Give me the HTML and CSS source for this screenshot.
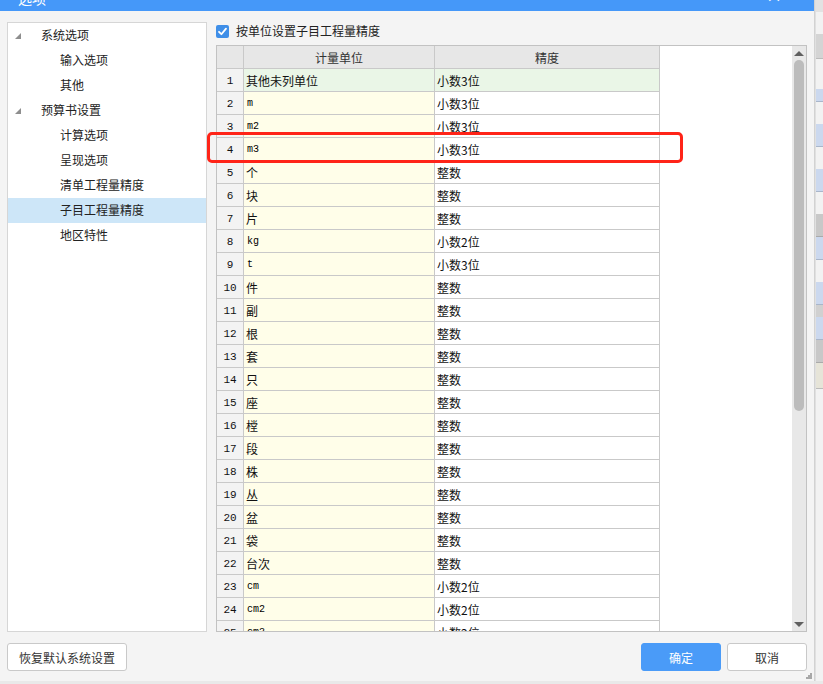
FILE: index.html
```html
<!DOCTYPE html>
<html lang="zh-CN">
<head>
<meta charset="utf-8">
<title>选项</title>
<link rel="stylesheet" href="styles.css">
</head>
<body>
<div class="screen">
  <div class="top">
    <div class="dialog">
      <div class="titlebar">
        <span class="title">选项</span>
        <span class="close">×</span>
      </div>
      <div class="content">
        <div class="tree">
          <div class="item lvl1"><span class="tri"></span>系统选项</div>
          <div class="item lvl2">输入选项</div>
          <div class="item lvl2">其他</div>
          <div class="item lvl1"><span class="tri"></span>预算书设置</div>
          <div class="item lvl2">计算选项</div>
          <div class="item lvl2">呈现选项</div>
          <div class="item lvl2">清单工程量精度</div>
          <div class="item lvl2 selected">子目工程量精度</div>
          <div class="item lvl2">地区特性</div>
        </div>
        <div class="rightcol">
          <label class="checkrow">
            <span class="checkbox"><svg width="13" height="13" viewBox="0 0 13 13"><path d="M3 6.8 L5.4 9.2 L10 3.6" fill="none" stroke="#fff" stroke-width="1.8" stroke-linecap="round" stroke-linejoin="round"/></svg></span>
            <span>按单位设置子目工程量精度</span>
          </label>
          <div class="tablebox">
            <div class="grid">
              <div class="row head">
                <div class="cell num"></div>
                <div class="cell unit center">计量单位</div>
                <div class="cell prec center">精度</div>
              </div>
              <div class="row first"><div class="cell num">1</div><div class="cell unit">其他未列单位</div><div class="cell prec">小数3位</div></div>
              <div class="row"><div class="cell num">2</div><div class="cell unit lat">m</div><div class="cell prec">小数3位</div></div>
              <div class="row"><div class="cell num">3</div><div class="cell unit lat">m2</div><div class="cell prec">小数3位</div></div>
              <div class="row"><div class="cell num">4</div><div class="cell unit lat">m3</div><div class="cell prec">小数3位</div></div>
              <div class="row"><div class="cell num">5</div><div class="cell unit">个</div><div class="cell prec">整数</div></div>
              <div class="row"><div class="cell num">6</div><div class="cell unit">块</div><div class="cell prec">整数</div></div>
              <div class="row"><div class="cell num">7</div><div class="cell unit">片</div><div class="cell prec">整数</div></div>
              <div class="row"><div class="cell num">8</div><div class="cell unit lat">kg</div><div class="cell prec">小数2位</div></div>
              <div class="row"><div class="cell num">9</div><div class="cell unit lat">t</div><div class="cell prec">小数3位</div></div>
              <div class="row"><div class="cell num">10</div><div class="cell unit">件</div><div class="cell prec">整数</div></div>
              <div class="row"><div class="cell num">11</div><div class="cell unit">副</div><div class="cell prec">整数</div></div>
              <div class="row"><div class="cell num">12</div><div class="cell unit">根</div><div class="cell prec">整数</div></div>
              <div class="row"><div class="cell num">13</div><div class="cell unit">套</div><div class="cell prec">整数</div></div>
              <div class="row"><div class="cell num">14</div><div class="cell unit">只</div><div class="cell prec">整数</div></div>
              <div class="row"><div class="cell num">15</div><div class="cell unit">座</div><div class="cell prec">整数</div></div>
              <div class="row"><div class="cell num">16</div><div class="cell unit">樘</div><div class="cell prec">整数</div></div>
              <div class="row"><div class="cell num">17</div><div class="cell unit">段</div><div class="cell prec">整数</div></div>
              <div class="row"><div class="cell num">18</div><div class="cell unit">株</div><div class="cell prec">整数</div></div>
              <div class="row"><div class="cell num">19</div><div class="cell unit">丛</div><div class="cell prec">整数</div></div>
              <div class="row"><div class="cell num">20</div><div class="cell unit">盆</div><div class="cell prec">整数</div></div>
              <div class="row"><div class="cell num">21</div><div class="cell unit">袋</div><div class="cell prec">整数</div></div>
              <div class="row"><div class="cell num">22</div><div class="cell unit">台次</div><div class="cell prec">整数</div></div>
              <div class="row"><div class="cell num">23</div><div class="cell unit lat">cm</div><div class="cell prec">小数2位</div></div>
              <div class="row"><div class="cell num">24</div><div class="cell unit lat">cm2</div><div class="cell prec">小数2位</div></div>
              <div class="row"><div class="cell num">25</div><div class="cell unit lat">cm3</div><div class="cell prec">小数2位</div></div>
            </div>
            <div class="scrollbar">
              <div class="arrow"><span class="up"></span></div>
              <div class="thumb"></div>
              <div class="spacer"></div>
              <div class="arrow"><span class="down"></span></div>
            </div>
            <div class="mark"></div>
          </div>
        </div>
      </div>
      <div class="footer">
        <button class="btn">恢复默认系统设置</button>
        <div class="footright">
          <button class="btn primary">确定</button>
          <button class="btn">取消</button>
        </div>
        <svg class="grip" width="6" height="6" viewBox="0 0 6 6"><g fill="#a8a8a8"><rect x="4" y="0" width="2" height="2"/><rect x="2" y="2" width="2" height="2"/><rect x="4" y="2" width="2" height="2"/><rect x="0" y="4" width="2" height="2"/><rect x="2" y="4" width="2" height="2"/><rect x="4" y="4" width="2" height="2"/></g></svg>
      </div>
    </div>
    <div class="appstrip">
      <div class="s s1"></div>
      <div class="s s2"></div>
      <div class="s s3"></div>
      <div class="s s4"></div>
      <div class="s s5"></div>
      <div class="s s2"></div>
      <div class="s s6"></div>
      <div class="s s2"></div>
      <div class="s s6"></div>
      <div class="s s2"></div>
      <div class="s s7"></div>
      <div class="s s6"></div>
      <div class="s s2"></div>
      <div class="s s6"></div>
      <div class="s s8"></div>
      <div class="s s6"></div>
      <div class="s s7"></div>
      <div class="s s9"></div>
      <div class="s s10"></div>
    </div>
  </div>
  <div class="bottomstrip"></div>
</div>
</body>
</html>
```

FILE: styles.css
```css
html, body {
  margin: 0;
  padding: 0;
}
body {
  width: 823px;
  height: 684px;
  overflow: hidden;
  background: #e8e8e8;
  font-family: "Noto Sans CJK SC", "Microsoft YaHei", sans-serif;
  color: #222;
}
.screen {
  display: flex;
  flex-direction: column;
  height: 684px;
}
.top {
  display: flex;
  height: 681px;
}
.dialog {
  width: 814px;
  flex: none;
  display: flex;
  flex-direction: column;
  background: #f4f4f4;
  border-right: 1px solid #d2d2d2;
  position: relative;
}
.titlebar {
  height: 11px;
  flex: none;
  background: #4598f9;
  color: #fff;
  overflow: hidden;
  display: flex;
  justify-content: space-between;
  align-items: flex-end;
  padding: 0 32px 0 18px;
}
.title {
  font-size: 14px;
  line-height: 14px;
  margin-bottom: 6px;
}
.close {
  font-size: 16px;
  line-height: 16px;
  margin-bottom: 8px;
}
.content {
  display: flex;
  gap: 9px;
  padding: 11px 7px 0 7px;
  height: 610px;
}
.tree {
  width: 200px;
  height: 610px;
  box-sizing: border-box;
  border: 1px solid #d6d6d6;
  background: #fff;
}
.item {
  height: 25px;
  box-sizing: border-box;
  padding-bottom: 2px;
  display: flex;
  align-items: center;
  font-size: 12px;
  color: #222;
}
.lvl1 {
  padding-left: 7px;
}
.lvl2 {
  padding-left: 52px;
}
.tri {
  width: 0;
  height: 0;
  border-left: 6px solid transparent;
  border-bottom: 6px solid #8e8e8e;
  margin-right: 20px;
  margin-top: 3px;
}
.selected {
  background: #cde6f8;
}
.rightcol {
  width: 591px;
  display: flex;
  flex-direction: column;
}
.checkrow {
  height: 17px;
  margin-bottom: 6px;
  display: flex;
  align-items: center;
  gap: 7px;
  font-size: 12px;
  color: #222;
}
.checkrow > span:last-child {
  margin-top: -1px;
}
.checkbox {
  width: 13px;
  height: 13px;
  border-radius: 2px;
  background: #3f8fe8;
  display: flex;
  margin-top: 1px;
}
.tablebox {
  position: relative;
  height: 587px;
  box-sizing: border-box;
  border: 1px solid #c2c2c2;
  background: #fff;
  display: flex;
}
.grid {
  flex: 1;
  overflow: hidden;
}
.row {
  display: flex;
  height: 23px;
  width: 443px;
  box-sizing: border-box;
  border-bottom: 1px solid #c9c9c9;
}
.cell {
  box-sizing: border-box;
  border-right: 1px solid #c9c9c9;
  display: flex;
  align-items: center;
  font-size: 12px;
  color: #111;
  white-space: nowrap;
}
.num {
  width: 27px;
  justify-content: center;
  background: #f3f3f3;
  font-family: "Liberation Mono", "DejaVu Sans Mono", monospace;
  font-size: 11px;
  padding-top: 1px;
}
.unit {
  width: 191px;
  background: #fffee9;
  padding-left: 2px;
}
.prec {
  width: 225px;
  background: #fff;
  padding-left: 2px;
}
.lat {
  font-family: "Liberation Mono", "DejaVu Sans Mono", monospace;
  font-size: 10px;
  color: #000;
  padding-top: 1px;
  padding-left: 3px;
}
.center {
  justify-content: center;
  padding-left: 0;
}
.head .cell {
  background: #e7e7e7;
  color: #333;
}
.first .unit, .first .prec {
  background: #eaf6e7;
}
.scrollbar {
  width: 14px;
  flex: none;
  background: #e8e8e8;
  display: flex;
  flex-direction: column;
  align-items: center;
}
.arrow {
  height: 14px;
  width: 14px;
  display: flex;
  align-items: center;
  justify-content: center;
}
.up {
  width: 0;
  height: 0;
  border-left: 5px solid transparent;
  border-right: 5px solid transparent;
  border-bottom: 5px solid #606060;
}
.down {
  width: 0;
  height: 0;
  border-left: 5px solid transparent;
  border-right: 5px solid transparent;
  border-top: 5px solid #606060;
}
.thumb {
  width: 10px;
  height: 351px;
  background: #bcbcbc;
  border-radius: 5px;
}
.spacer {
  flex: 1;
}
.mark {
  position: absolute;
  left: -10px;
  top: 86px;
  width: 476px;
  height: 31px;
  box-sizing: border-box;
  border: 3px solid #ff2418;
  border-radius: 5px;
}
.footer {
  position: relative;
  display: flex;
  justify-content: space-between;
  padding: 11px 7px 0 7px;
  height: 49px;
  box-sizing: border-box;
}
.footright {
  display: flex;
  gap: 6px;
}
.btn {
  height: 28px;
  box-sizing: border-box;
  border: 1px solid #c9c9c9;
  border-radius: 3px;
  background: #fff;
  font-family: "Noto Sans CJK SC", sans-serif;
  font-size: 12px;
  color: #333;
  padding: 0;
  width: 80px;
}
.footer > .btn {
  width: 120px;
}
.btn.primary {
  background: #4a9bf8;
  border-color: #4a9bf8;
  color: #fff;
}
.grip {
  position: absolute;
  right: 2px;
  bottom: 2px;
}
.appstrip {
  flex: 1;
  display: flex;
  flex-direction: column;
  background: #f2f2f2;
  border-left: 1px solid #e0e0e0;
}
.s { flex: none; }
.s1 { height: 12px; background: #e2e2e2; }
.s2 { height: 22px; background: #f2f2f2; }
.s3 { height: 24px; background: #d4d4d4; border-bottom: 1px solid #bbb; }
.s4 { height: 30px; background: #f2f2f2; }
.s5 { height: 12px; background: #cbd8ee; border-bottom: 1px solid #a9b6ca; }
.s6 { height: 22px; background: #cbd8ee; border-bottom: 1px solid #a9b6ca; }
.s7 { height: 22px; background: #c8c8c8; border-bottom: 1px solid #aaa; }
.s8 { height: 12px; background: #d0d0d0; }
.s9 { height: 25px; background: #e6e4d8; border-bottom: 1px solid #bbb; }
.s10 { flex: 1; background: #f2f2f2; }
.bottomstrip {
  height: 3px;
  background: #e9e9e9;
}
```
